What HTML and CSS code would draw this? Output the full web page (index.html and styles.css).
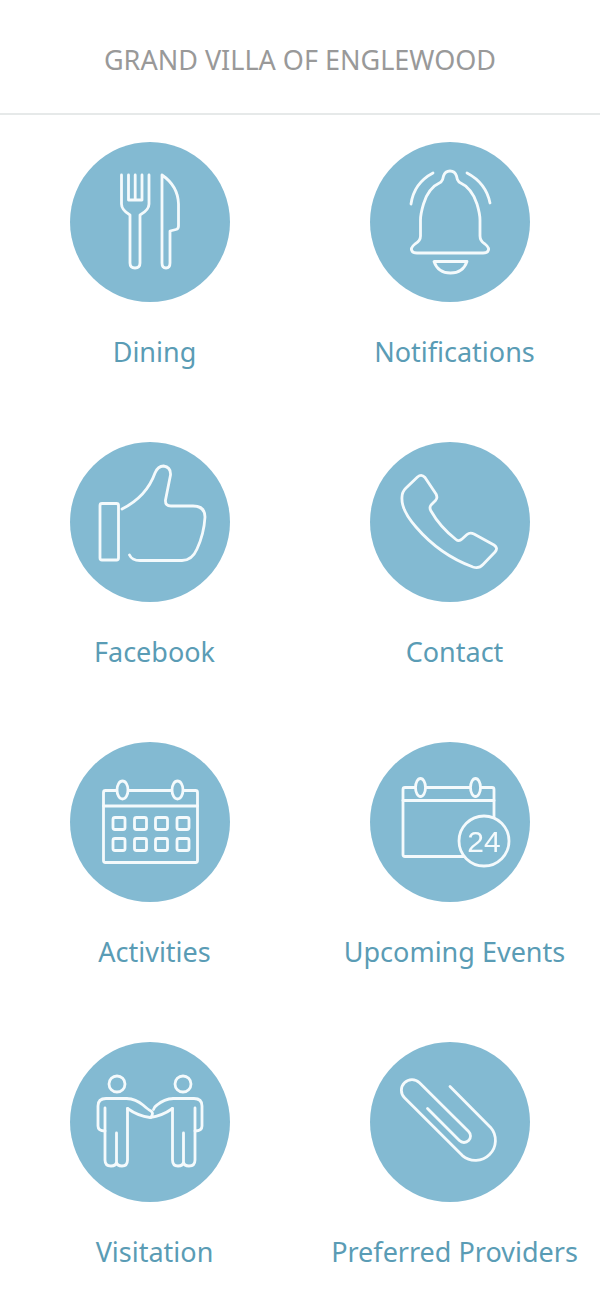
FILE: index.html
```html
<!DOCTYPE html>
<html lang="en">
<head>
    <meta charset="UTF-8">
    <meta name="viewport" content="width=device-width, initial-scale=1.0">
    <title>Grand Villa of Englewood</title>
    <link rel="stylesheet" href="styles.css">
</head>
<body>

<header class="top-bar">
    <h1 class="top-title">GRAND VILLA OF ENGLEWOOD</h1>
</header>

<div class="menu">
    <!-- Dining -->
    <a class="menu-item" href="#">
        <span class="circle">
            <svg class="icon" viewBox="0 0 160 160">
                <path d="M51.500 33V62Q51.500 68 60 73V121Q60 126 65 126Q70 126 70 121V73Q79 68 79 62V33M58.500 33V58H72V33M65.200 33V58"/>
                <path d="M92 33Q108 44 108.500 62V84Q108.500 87 106 87.500L100 89V121Q100 126 96 126Q92 126 92 121Z"/>
            </svg>
        </span>
        <span class="label">Dining</span>
    </a>

    <!-- Notifications -->
    <a class="menu-item" href="#">
        <span class="circle">
            <svg class="icon" viewBox="0 0 160 160">
                <path d="M41 62Q44 41 63 31M97 31Q116 41 120 61"/>
                <path d="M71 40Q73 38 73.500 34Q75 29 80 29Q85 29 86.500 34Q87 38 89 40Q102 46 107 62Q110 72 110 78V94Q110 99 115 102Q120 106 118 109Q117 111 113 111H47Q43 111 42 109Q40 106 45 102Q50.500 99 50.500 94V78Q50.500 72 53.500 62Q58 46 71 40Z"/>
                <path d="M64 119.500H97Q93 131 80.500 131Q68 131 64 119.500Z"/>
            </svg>
        </span>
        <span class="label">Notifications</span>
    </a>

    <!-- Facebook -->
    <a class="menu-item" href="#">
        <span class="circle">
            <svg class="icon" viewBox="0 0 160 160">
                <rect x="30" y="61.500" width="18.500" height="56.500" rx="2"/>
                <path d="M52 67C70 58 80 45 85 31Q88 24 93.500 24Q101 25 100.500 33L95.500 58Q95 64 101 64H123Q135 64 135 75Q134 92 127 107Q122 118.500 112 118.500H70Q62 118.500 59.500 113"/>
            </svg>
        </span>
        <span class="label">Facebook</span>
    </a>

    <!-- Contact -->
    <a class="menu-item" href="#">
        <span class="circle">
            <svg class="icon" viewBox="0 0 160 160">
                <path d="M47.500 35Q51.500 31.500 55 35.500L66 52Q68 56 65.500 58.500L61 63Q59 65.500 61 69Q70 85 86 97.500Q89 100 92 97L97 92.500Q100 90 104 92L124 103Q128.500 106 125 110L113 122.500Q109 127 103 125Q70 113 46 85Q31 68 32 55Q32 50 36 46Z"/>
            </svg>
        </span>
        <span class="label">Contact</span>
    </a>

    <!-- Activities -->
    <a class="menu-item" href="#">
        <span class="circle">
            <svg class="icon" viewBox="0 0 160 160">
                <rect x="33.500" y="48.500" width="94" height="72" rx="2"/>
                <path d="M33.500 64H127.500"/>
                <ellipse class="cut" cx="52.500" cy="48" rx="5.500" ry="9"/>
                <ellipse class="cut" cx="107.500" cy="48" rx="5.500" ry="9"/>
                <rect x="43" y="75.500" width="12" height="12" rx="2"/>
                <rect x="64.500" y="75.500" width="12" height="12" rx="2"/>
                <rect x="85.500" y="75.500" width="12" height="12" rx="2"/>
                <rect x="107" y="75.500" width="12" height="12" rx="2"/>
                <rect x="43" y="96.500" width="12" height="12" rx="2"/>
                <rect x="64.500" y="96.500" width="12" height="12" rx="2"/>
                <rect x="85.500" y="96.500" width="12" height="12" rx="2"/>
                <rect x="107" y="96.500" width="12" height="12" rx="2"/>
            </svg>
        </span>
        <span class="label">Activities</span>
    </a>

    <!-- Upcoming Events -->
    <a class="menu-item" href="#">
        <span class="circle">
            <svg class="icon" viewBox="0 0 160 160">
                <rect x="33" y="45.500" width="91" height="69" rx="2"/>
                <path d="M33 58.500H124"/>
                <ellipse class="cut" cx="50.500" cy="45.500" rx="5" ry="9"/>
                <ellipse class="cut" cx="105.500" cy="45.500" rx="5" ry="9"/>
                <circle class="cut" cx="114" cy="99" r="25"/>
                <text class="day" x="114" y="110">24</text>
            </svg>
        </span>
        <span class="label">Upcoming Events</span>
    </a>

    <!-- Visitation -->
    <a class="menu-item" href="#">
        <span class="circle">
            <svg class="icon" viewBox="0 0 160 160">
                <g id="person">
                    <circle cx="47" cy="42" r="8"/>
                    <path d="M56.500 56.500H36Q28 56.500 28 64V84Q28 89 35 89"/>
                    <path d="M35 66V118Q35 124 41 124Q46 124 46.500 120V91V120Q47 124 52 124Q57.500 124 57.500 118V66.500"/>
                </g>
                <use href="#person" transform="matrix(-1 0 0 1 160 0)"/>
                <path d="M56.500 56.500Q66 57 73 63Q78 67.500 81 69Q84 71 81 75.300"/>
                <path d="M103.500 56.500Q94 57 87 63Q84 65 83.500 67.500"/>
                <path d="M57.500 66.500Q68 74 80 75.500Q92 74 102.500 66.500"/>
            </svg>
        </span>
        <span class="label">Visitation</span>
    </a>

    <!-- Preferred Providers -->
    <a class="menu-item" href="#">
        <span class="circle">
            <svg class="icon" viewBox="0 0 160 160">
                <path d="M80 44.500L120.600 85.400A20 20 0 0 1 92.400 113.600L34.500 55.800A10.600 10.600 0 0 1 49.500 40.800L98.600 89.400A6.500 6.500 0 0 1 89.400 98.600L57.500 66.500"/>
            </svg>
        </span>
        <span class="label">Preferred Providers</span>
    </a>
</div>

</body>
</html>
```

FILE: styles.css
```css
body {
    font-family: "Noto Sans", "Open Sans", sans-serif;
    margin: 0;
    padding: 0;
    background: #fff;
}
.top-bar {
    height: 113px;
    display: flex;
    align-items: center;
    justify-content: center;
    border-bottom: 2px solid #e6e9e9;
}
.top-title {
    margin: 0 0 -5px;
    font-size: 27px;
    font-weight: 400;
    color: #999;
}
.menu {
    display: grid;
    grid-template-columns: 300px 300px;
    grid-auto-rows: 300px;
    padding-top: 27px;
}
.menu-item {
    display: flex;
    flex-direction: column;
    align-items: center;
    text-decoration: none;
}
.circle {
    width: 160px;
    height: 160px;
    border-radius: 50%;
    background: #83bad2;
    filter: blur(0.4px);
}
.icon {
    display: block;
    width: 160px;
    height: 160px;
    fill: none;
    stroke: #f4fafc;
    stroke-width: 2.8;
    stroke-linecap: round;
    stroke-linejoin: round;
}
.icon .cut {
    fill: #83bad2;
}
.icon .day {
    font-family: "Liberation Sans", sans-serif;
    font-size: 30px;
    text-anchor: middle;
    fill: #f4fafc;
    stroke: none;
}
.label {
    margin-top: 31px;
    padding-left: 9px;
    font-size: 27px;
    line-height: 38px;
    color: #5a9cb5;
}
```
